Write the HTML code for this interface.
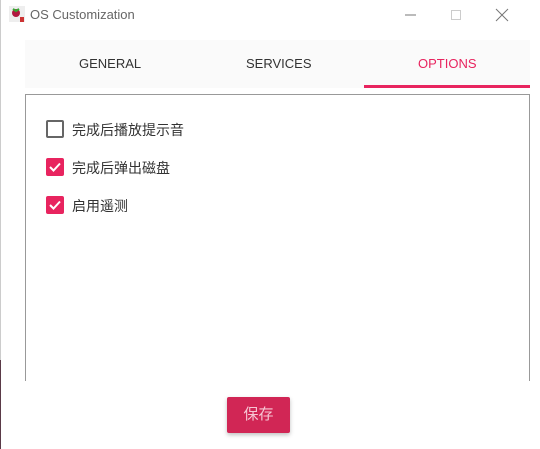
<!DOCTYPE html>
<html><head><meta charset="utf-8"><style>
body{margin:0;width:540px;height:449px;background:#fff;position:relative;overflow:hidden;font-family:"Liberation Sans","Noto Sans CJK SC",sans-serif;}
.lb{position:absolute;left:0;top:0;width:1px;height:449px;background:#ccc}
.lb2{position:absolute;left:0;top:360px;width:1px;height:89px;background:#5a3a48}
.title{position:absolute;left:30px;top:7px;font-size:13px;color:#666}
.tabs{position:absolute;left:25px;top:40px;width:505px;height:48px;background:#fafafa}
.tab{position:absolute;top:16px;font-size:13px;color:#333}
.ul{position:absolute;left:339px;top:45px;width:166px;height:3px;background:#e8245f}
.box{position:absolute;left:25px;top:94px;width:503px;height:286px;border:1px solid #999;border-bottom:none}
.cb{position:absolute;left:46px;width:18px;height:18px;box-sizing:border-box;border-radius:2px}
.lbl{position:absolute;left:72px;font-size:14px;color:#333}
.btn{position:absolute;left:227px;top:397px;width:63px;height:36px;background:#d12655;border-radius:2px;box-shadow:0 2px 4px rgba(0,0,0,.25);color:#f6c6d4;font-size:15px;text-align:center;line-height:36px}
</style></head><body>
<div class="lb"></div><div class="lb2"></div>
<svg style="position:absolute;left:9px;top:6px" width="16" height="16"><rect x="0" y="0" width="16" height="16" fill="#eee"/><circle cx="7" cy="7" r="4" fill="#b0183f"/><path d="M4 3 L7 5 L10 3" stroke="#3a3" stroke-width="2" fill="none"/><rect x="11" y="11" width="4" height="5" fill="#c33"/></svg>
<div class="title">OS Customization</div>
<svg style="position:absolute;left:405px;top:8px" width="120" height="14"><line x1="0" y1="7" x2="11" y2="7" stroke="#777"/><rect x="46.5" y="2.5" width="9" height="9" fill="none" stroke="#ccc"/><path d="M91 1 L103 13 M103 1 L91 13" stroke="#777"/></svg>
<div class="tabs">
<div class="tab" style="left:54px">GENERAL</div>
<div class="tab" style="left:221px">SERVICES</div>
<div class="tab" style="left:393px;color:#e8245f">OPTIONS</div>
<div class="ul"></div>
</div>
<div class="box"></div>
<div class="cb" style="top:120px;border:2px solid #666"></div>
<div class="lbl" style="top:120px">完成后播放提示音</div>
<div class="cb" style="top:158px;background:#e8245f"><svg width="18" height="18"><path d="M4 9 L7.5 12.5 L14 5.5" stroke="#fff" stroke-width="2" fill="none"/></svg></div>
<div class="lbl" style="top:158px">完成后弹出磁盘</div>
<div class="cb" style="top:196px;background:#e8245f"><svg width="18" height="18"><path d="M4 9 L7.5 12.5 L14 5.5" stroke="#fff" stroke-width="2" fill="none"/></svg></div>
<div class="lbl" style="top:196px">启用遥测</div>
<div class="btn">保存</div>
</body></html>
